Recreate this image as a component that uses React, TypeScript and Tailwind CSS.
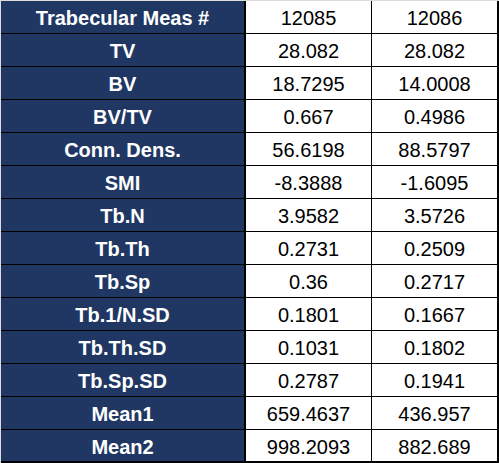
const rows: [string, string, string][] = [
  ["Trabecular Meas #", "12085", "12086"],
  ["TV", "28.082", "28.082"],
  ["BV", "18.7295", "14.0008"],
  ["BV/TV", "0.667", "0.4986"],
  ["Conn. Dens.", "56.6198", "88.5797"],
  ["SMI", "-8.3888", "-1.6095"],
  ["Tb.N", "3.9582", "3.5726"],
  ["Tb.Th", "0.2731", "0.2509"],
  ["Tb.Sp", "0.36", "0.2717"],
  ["Tb.1/N.SD", "0.1801", "0.1667"],
  ["Tb.Th.SD", "0.1031", "0.1802"],
  ["Tb.Sp.SD", "0.2787", "0.1941"],
  ["Mean1", "659.4637", "436.957"],
  ["Mean2", "998.2093", "882.689"],
];

const App = () => {
  return (
    <div className="w-[499px] h-[463px] bg-[#dcdcdc] pt-px pl-px font-['Liberation_Sans',Arial,sans-serif] text-[20px] leading-none">
      <div className="flex flex-col">
        {rows.map((row, i) => {
          const last = i === rows.length - 1;
          return (
            <div
              key={row[0]}
              className={`flex h-[33px] border-black ${last ? "border-b-2" : "border-b"}`}
            >
              <div className="w-[245px] bg-[#203764] text-white font-bold border-r-2 border-black flex items-center justify-center pt-[2px]">
                {row[0]}
              </div>
              <div className="w-[126px] bg-white text-black border-r border-black flex items-center justify-center pt-[2px]">
                {row[1]}
              </div>
              <div className="w-[127px] bg-white text-black border-r-2 border-black flex items-center justify-center pt-[2px]">
                {row[2]}
              </div>
            </div>
          );
        })}
      </div>
    </div>
  );
};

export default App;
